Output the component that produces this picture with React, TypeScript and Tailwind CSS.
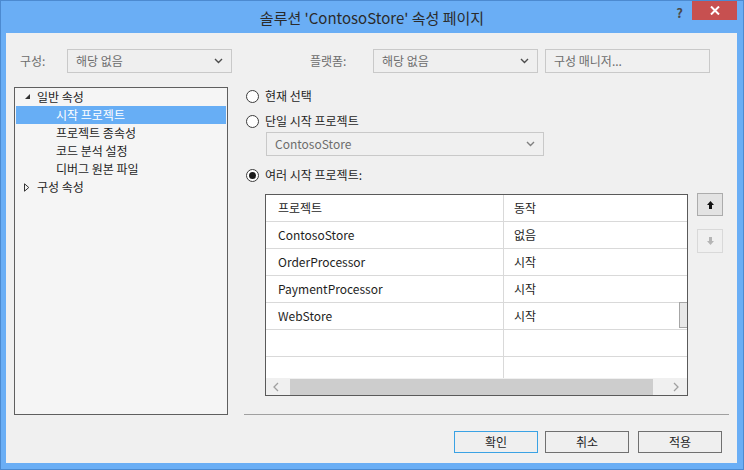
import React from "react";
import clsx from "clsx";

type TreeItem = { label: string; level: 0 | 1; open?: boolean; selected?: boolean };

const treeItems: TreeItem[] = [
  { label: "일반 속성", level: 0, open: true },
  { label: "시작 프로젝트", level: 1, selected: true },
  { label: "프로젝트 종속성", level: 1 },
  { label: "코드 분석 설정", level: 1 },
  { label: "디버그 원본 파일", level: 1 },
  { label: "구성 속성", level: 0, open: false },
];

const rows = [
  ["ContosoStore", "없음"],
  ["OrderProcessor", "시작"],
  ["PaymentProcessor", "시작"],
  ["WebStore", "시작"],
  ["", ""],
  ["", ""],
  ["", ""],
];

const Chevron = ({ color = "#4d4d4d" }: { color?: string }) => (
  <svg width="9" height="6" viewBox="0 0 9 6">
    <path d="M1 1l3.5 3.5L8 1" fill="none" stroke={color} strokeWidth="1.4" />
  </svg>
);

const Dropdown = ({ text, className, disabled }: { text: string; className?: string; disabled?: boolean }) => (
  <div
    className={clsx(
      "flex h-[24px] items-center justify-between border border-[#c9c9c9] pl-[8px] pr-[8px] text-[#6d6d6d]",
      disabled ? "bg-[#f0f0f0]" : "bg-[#efefef]",
      className
    )}
  >
    <span>{text}</span>
    <Chevron color={disabled ? "#808080" : "#4d4d4d"} />
  </div>
);

const Radio = ({ checked, label }: { checked?: boolean; label: string }) => (
  <div className="flex h-[18px] items-center">
    <span className="ml-[2px] flex h-[13px] w-[13px] items-center justify-center rounded-full border border-[#3c3c3c] bg-white">
      {checked && <span className="h-[7px] w-[7px] rounded-full bg-[#1a1a1a]" />}
    </span>
    <span className="ml-[6px] text-[#1e1e1e]">{label}</span>
  </div>
);

const Button = ({ label, primary, className }: { label: string; primary?: boolean; className?: string }) => (
  <button
    className={clsx(
      "h-[22px] w-[84px] border bg-[#efefef] text-[#1e1e1e]",
      primary ? "border-[#3aa2e4]" : "border-[#707070]",
      className
    )}
  >
    {label}
  </button>
);

export default function App() {
  return (
    <div className="flex h-[470px] w-[744px] flex-col border border-[#4c8ad0] bg-[#6aaef5] font-['Noto_Sans_CJK_KR',sans-serif] text-[12px] leading-none">
      {/* title bar */}
      <div className="relative flex h-[32px] items-center justify-center">
        <span className="text-[15px] text-[#2b2b2b]">솔루션 'ContosoStore' 속성 페이지</span>
        <span className="absolute right-[60px] top-[5px] text-[13px] font-bold text-[#4a4a4a]">?</span>
        <div className="absolute right-[6px] top-0 flex h-[19px] w-[45px] items-center justify-center bg-[#c75050]">
          <svg width="10" height="9" viewBox="0 0 10 9">
            <path d="M1 0.5l8 8M9 0.5l-8 8" stroke="white" strokeWidth="2" />
          </svg>
        </div>
      </div>

      <div className="mb-[6px] ml-[5px] mr-[6px] flex flex-1 flex-col bg-[#f0f0f0]">
        {/* configuration row */}
        <div className="mt-[16px] flex h-[24px] items-center">
          <span className="ml-[14px] w-[47px] text-[#6d6d6d]">구성:</span>
          <Dropdown text="해당 없음" className="w-[165px]" />
          <span className="ml-[78px] w-[63px] text-[#6d6d6d]">플랫폼:</span>
          <Dropdown text="해당 없음" className="w-[165px]" />
          <div className="ml-[7px] flex h-[24px] w-[165px] items-center border border-[#c9c9c9] pl-[8px] text-[#6d6d6d]">
            구성 매니저...
          </div>
        </div>

        {/* main area */}
        <div className="mt-[14px] flex h-[328px]">
          <div className="ml-[8px] w-[214px] border border-[#5f5f5f] bg-[#f5f5f5] px-[1px]">
            {treeItems.map((item) => (
              <div
                key={item.label}
                className={clsx(
                  "relative flex h-[18px] items-center",
                  item.selected ? "bg-[#67aef5] text-white" : "text-[#1e1e1e]"
                )}
              >
                {item.level === 0 && (
                  <span className="absolute left-[8px] top-[5px]">
                    {item.open ? (
                      <svg width="7" height="7" viewBox="0 0 7 7">
                        <path d="M6 1V6H1Z" fill="#333" />
                      </svg>
                    ) : (
                      <svg width="6" height="9" viewBox="0 0 6 9">
                        <path d="M0.5 0.8L4.8 4.5L0.5 8.2Z" fill="none" stroke="#333" strokeWidth="1" />
                      </svg>
                    )}
                  </span>
                )}
                <span className={item.level === 0 ? "ml-[21px]" : "ml-[40px]"}>{item.label}</span>
              </div>
            ))}
          </div>

          <div className="ml-[16px] flex w-[485px] flex-col">
            <Radio label="현재 선택" />
            <div className="mt-[7px]">
              <Radio label="단일 시작 프로젝트" />
            </div>
            <Dropdown text="ContosoStore" disabled className="ml-[22px] mt-[2px] w-[278px]" />
            <div className="mt-[10px]">
              <Radio checked label="여러 시작 프로젝트:" />
            </div>

            <div className="mt-[10px] flex items-start">
              <div className="relative ml-[21px] flex h-[202px] w-[423px] flex-col border border-[#5a5a5a] bg-white">
                <div className="h-[183px] overflow-hidden">
                  {[["프로젝트", "동작"], ...rows].map((r, i) => (
                    <div key={i} className="flex h-[27px] border-b border-[#d9d9d9] text-[#1e1e1e]">
                      <div className="flex w-[238px] items-center border-r border-[#d9d9d9] pl-[12px]">{r[0]}</div>
                      <div className="flex items-center pl-[10px]">{r[1]}</div>
                    </div>
                  ))}
                </div>
                <div className="flex h-[17px] items-end bg-[#f0f0f0]">
                  <div className="flex h-[17px] w-[20px] items-center justify-center">
                    <svg width="6" height="10" viewBox="0 0 6 10">
                      <path d="M5 1L1 5L5 9" fill="none" stroke="#a0a0a0" strokeWidth="1.3" />
                    </svg>
                  </div>
                  <div className="ml-[4px] h-[16px] w-[363px] bg-[#cdcdcd]" />
                  <div className="flex-1" />
                  <div className="flex h-[17px] w-[22px] items-center justify-center">
                    <svg width="6" height="10" viewBox="0 0 6 10">
                      <path d="M1 1L5 5L1 9" fill="none" stroke="#a0a0a0" strokeWidth="1.3" />
                    </svg>
                  </div>
                </div>
                <div className="absolute right-0 top-[107px] h-[26px] w-[8px] border border-r-0 border-[#a6a6a6] bg-[#e8e8e8]" />
              </div>

              <div className="ml-[9px] mt-[-1px] flex flex-col">
                <div className="flex h-[23px] w-[26px] items-center justify-center border border-[#acacac] bg-[#e3e3e3]">
                  <svg width="7" height="8" viewBox="0 0 7 8">
                    <path d="M3.5 0L7 4H5V8H2V4H0Z" fill="#111" />
                  </svg>
                </div>
                <div className="mt-[13px] flex h-[24px] w-[26px] items-center justify-center border border-[#d9d9d9] bg-[#f0f0f0]">
                  <svg width="7" height="8" viewBox="0 0 7 8">
                    <path d="M3.5 8L7 4H5V0H2V4H0Z" fill="#b5b5b5" />
                  </svg>
                </div>
              </div>
            </div>

            <div className="mt-auto h-px w-[485px] bg-[#a0a0a0]" />
          </div>
        </div>

        {/* buttons */}
        <div className="mt-[16px] flex justify-end pr-[15px]">
          <Button label="확인" primary />
          <Button label="취소" className="ml-[7px]" />
          <Button label="적용" className="ml-[9px]" />
        </div>
      </div>
    </div>
  );
}
